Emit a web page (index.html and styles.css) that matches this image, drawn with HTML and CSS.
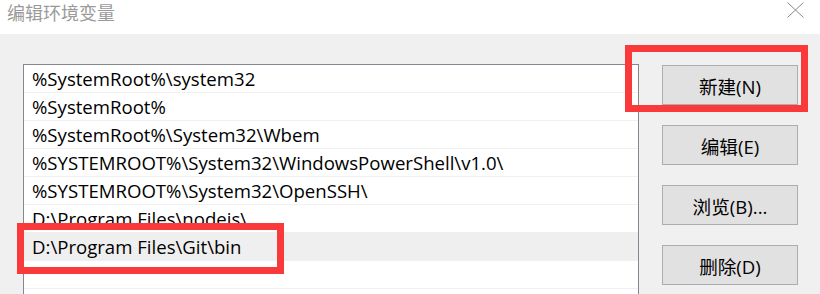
FILE: index.html
```html
<!DOCTYPE html>
<html lang="zh-CN">
<head>
<meta charset="utf-8">
<title>编辑环境变量</title>
<link rel="stylesheet" href="styles.css">
</head>
<body>
<div class="dialog">
  <header class="titlebar">
    <span class="title">编辑环境变量</span>
    <svg class="close" width="17" height="16" viewBox="0 0 17 16"><path d="M0.5 0.5 L16.5 15.5 M16.5 0.5 L0.5 15.5" stroke="#8a8a8a" stroke-width="1" fill="none"/></svg>
  </header>
  <main class="body">
    <div class="list">
      <div class="row">%SystemRoot%\system32</div>
      <div class="row">%SystemRoot%</div>
      <div class="row">%SystemRoot%\System32\Wbem</div>
      <div class="row">%SYSTEMROOT%\System32\WindowsPowerShell\v1.0\</div>
      <div class="row">%SYSTEMROOT%\System32\OpenSSH\</div>
      <div class="row">D:\Program Files\nodejs\</div>
      <div class="row selected">D:\Program Files\Git\bin</div>
      <div class="row"></div>
    </div>
    <div class="buttons">
      <button class="btn">新建(N)</button>
      <button class="btn">编辑(E)</button>
      <button class="btn">浏览(B)...</button>
      <button class="btn">删除(D)</button>
    </div>
  </main>
  <div class="mark mark-new"></div>
  <div class="mark mark-git"></div>
</div>
</body>
</html>
```

FILE: styles.css
```css
html, body {
  margin: 0;
  padding: 0;
  background: #f0f0f0;
  width: 820px;
  height: 294px;
  overflow: hidden;
}
.dialog {
  position: relative;
  width: 820px;
  height: 294px;
  font-family: "Open Sans", "Noto Sans CJK SC", sans-serif;
  color: #000;
}
.titlebar {
  height: 34px;
  background: #fff;
  display: flex;
  align-items: flex-start;
  justify-content: space-between;
}
.title {
  font-family: "Noto Sans CJK SC", sans-serif;
  font-size: 18px;
  line-height: 24px;
  color: #9a9a9a;
  margin-left: 7px;
}
.close {
  margin-top: 2px;
  margin-right: 16px;
}
.body {
  display: flex;
  padding-left: 23px;
  padding-top: 30px;
}
.list {
  width: 614px;
  height: 240px;
  border: 1px solid #828790;
  border-bottom: none;
  background: #fff;
}
.row {
  height: 27px;
  border-bottom: 1px solid #f0f0f0;
  padding-left: 8px;
  font-size: 18.6px;
  line-height: 28px;
  white-space: nowrap;
}
.row.selected {
  background: #efefef;
}
.buttons {
  display: flex;
  flex-direction: column;
  gap: 20px;
  margin-left: 23px;
  padding-top: 1px;
}
.btn {
  width: 136px;
  height: 40px;
  margin: 0;
  padding: 0;
  background: #e1e1e1;
  border: 1px solid #adadad;
  font-family: "Open Sans", "Noto Sans CJK SC", sans-serif;
  font-size: 18.6px;
  color: #000;
}
.mark {
  position: absolute;
  border: 7px solid #fa3a3a;
  box-sizing: border-box;
}
.mark-new {
  left: 625px;
  top: 45px;
  width: 183px;
  height: 67px;
}
.mark-git {
  left: 17px;
  top: 223px;
  width: 267px;
  height: 51px;
}
```
